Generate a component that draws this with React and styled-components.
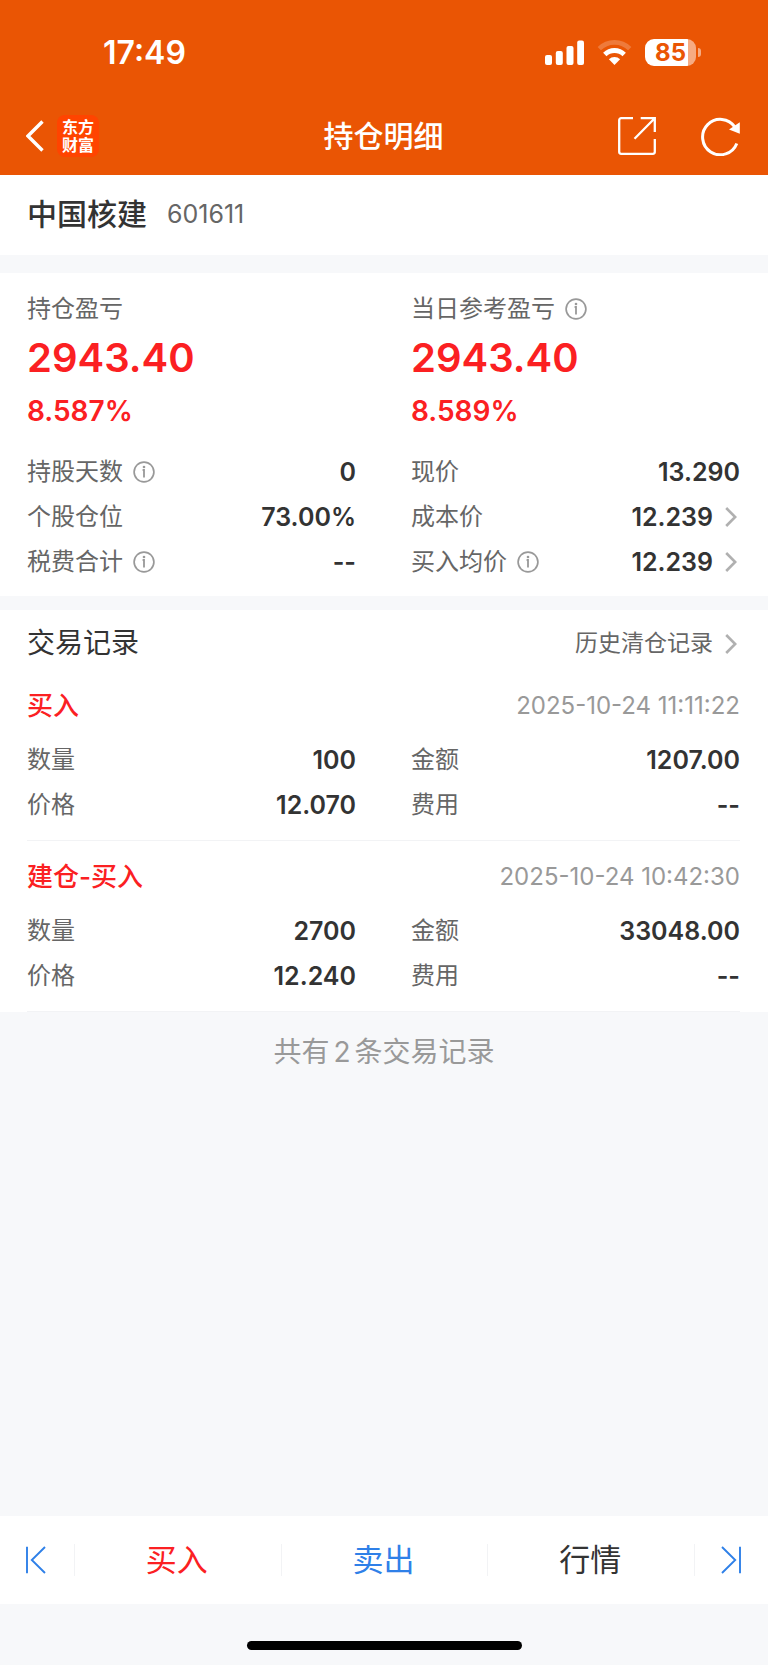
import React from "react";
import styled, { createGlobalStyle } from "styled-components";

const GlobalStyle = createGlobalStyle`
  :root {
    --brand: #ea5504;
    --rise: #fb2022;
    --link: #2f80e8;
    --text: #333;
    --s-text: #666;
    --muted: #999;
    --page: #f7f8fa;
    --line: #f2f3f5;
  }

  * {
    box-sizing: border-box;
  }

  body {
    margin: 0;
    background: var(--page);
    color: var(--text);
    font-family: Inter, "Noto Sans CJK SC", sans-serif;
    font-size: 25px;
    line-height: 1.2;
  }

  button {
    margin: 0;
    padding: 0;
    border: 0;
    background: none;
    color: inherit;
    font: inherit;
    cursor: pointer;
  }

  svg {
    display: block;
    flex: none;
  }
`;

const Page = styled.div`
  display: flex;
  flex-direction: column;
  min-height: 100vh;
`;

const Header = styled.header`
  background: var(--brand);
  color: white;
  padding-bottom: 8px;
`;

const StatusBar = styled.div`
  display: flex;
  align-items: center;
  justify-content: space-between;
  height: 105px;
  padding: 0 67px 0 103px;
`;

const Clock = styled.time`
  font-size: 32px;
  font-weight: 600;
  line-height: 40px;
`;

const StatusIcons = styled.div`
  display: flex;
  align-items: center;
  gap: 13px;
`;

const Battery = styled.div`
  display: flex;
  align-items: center;
  gap: 2px;
`;

const BatteryBody = styled.div`
  width: 51px;
  height: 27px;
  border-radius: 9px;
  background: linear-gradient(to right, white 85%, #f6ab83 85%);
  color: var(--brand);
  font-size: 24px;
  font-weight: 700;
  line-height: 27px;
  text-align: center;
`;

const BatteryCap = styled.div`
  width: 3px;
  height: 9px;
  border-radius: 0 4px 4px 0;
  background: #f6ab83;
`;

const NavBar = styled.div`
  display: grid;
  grid-template-columns: 1fr auto 1fr;
  align-items: center;
  height: 62px;
  padding: 0 27px 0 26px;
`;

const NavGroup = styled.div`
  display: flex;
  align-items: center;
  justify-content: ${(p) => (p.$end ? "flex-end" : "flex-start")};
  gap: ${(p) => (p.$end ? "45px" : "13px")};
`;

const Title = styled.h1`
  margin: 0;
  font-size: 30px;
  font-weight: 500;
`;

const Logo = styled.div`
  width: 42px;
  height: 42px;
  padding: 3px 5px;
  border-radius: 8px;
  background: #ff4400;
  font-size: 16px;
  font-weight: 700;
  line-height: 18px;
`;

const Section = styled.section`
  background: white;
  padding: 0 28px 0 27px;
  margin-bottom: ${(p) => p.$gap || 0}px;
`;

const Stock = styled.div`
  display: flex;
  align-items: center;
  gap: 20px;
  height: 80px;
  padding-bottom: 2px;
`;

const StockName = styled.h2`
  margin: 0;
  font-size: 30px;
  font-weight: 500;
`;

const StockCode = styled.span`
  color: var(--s-text);
`;

const Columns = styled.div`
  display: grid;
  grid-template-columns: 1fr 1fr;
  column-gap: 55px;
`;

const Profits = styled(Columns)`
  padding: 18px 0 16px;
`;

const Label = styled.div`
  display: flex;
  align-items: center;
  gap: 10px;
  color: var(--s-text);
  font-size: 24px;
  line-height: 36px;
`;

const Amount = styled.div`
  color: var(--rise);
  font-size: 40px;
  font-weight: 600;
  line-height: 62px;
`;

const Percent = styled.div`
  color: var(--rise);
  font-size: 28px;
  font-weight: 600;
  line-height: 44px;
`;

const Facts = styled(Columns)`
  padding-bottom: ${(p) => p.$bottom}px;
`;

const Fact = styled.div`
  display: flex;
  align-items: center;
  justify-content: space-between;
  height: 45px;
`;

const Value = styled.div`
  display: flex;
  align-items: center;
  font-weight: 600;
`;

const MoreButton = styled.button`
  display: flex;
  align-items: center;
  gap: 12px;
  padding-right: 3px;
`;

const RecordsHeader = styled.div`
  display: flex;
  align-items: center;
  justify-content: space-between;
  height: 60px;
  padding-top: 7px;
`;

const RecordsTitle = styled.h2`
  margin: 0;
  font-size: 28px;
  font-weight: 400;
`;

const HistoryLink = styled.a`
  display: flex;
  align-items: center;
  gap: 12px;
  padding-right: 3px;
  color: var(--s-text);
  font-size: 23px;
  text-decoration: none;
`;

const Record = styled.article`
  padding-top: 18px;
  border-bottom: 1px solid var(--line);
`;

const RecordTop = styled.div`
  display: flex;
  align-items: center;
  justify-content: space-between;
  height: 36px;
  margin-bottom: 13px;
`;

const RecordType = styled.h3`
  margin: 0;
  color: var(--rise);
  font-size: 26px;
  font-weight: 500;
`;

const RecordTime = styled.time`
  color: var(--muted);
  font-size: 24px;
`;

const Total = styled.p`
  flex: 1;
  margin: 0;
  padding-top: 18px;
  color: var(--muted);
  font-size: 28px;
  line-height: 44px;
  text-align: center;
`;

const Count = styled.span`
  margin: 0 4px;
`;

const TabBar = styled.nav`
  display: grid;
  grid-template-columns: 74px 1fr 1fr 1fr 74px;
  align-items: center;
  height: 88px;
  background: white;
`;

const Tab = styled.button`
  display: flex;
  align-items: center;
  justify-content: center;
  height: 32px;
  padding-right: 2px;
  color: ${(p) => p.$color};
  font-size: 31px;

  & + & {
    border-left: 1px solid var(--line);
  }
`;

const HomeArea = styled.div`
  display: flex;
  justify-content: center;
  height: 61px;
  padding-top: 37px;
`;

const HomeIndicator = styled.div`
  width: 275px;
  height: 9px;
  border-radius: 5px;
  background: black;
`;

const SignalIcon = () => (
  <svg width="39" height="25" viewBox="0 0 39 25" fill="currentColor">
    <rect x="0" y="15" width="7" height="10" rx="2" />
    <rect x="10.8" y="11" width="7" height="14" rx="2" />
    <rect x="21.5" y="6" width="7" height="19" rx="2" />
    <rect x="32.2" y="0.5" width="6.8" height="24.5" rx="2" />
  </svg>
);

const WifiIcon = () => (
  <svg width="35" height="25" viewBox="0 0 35 25" fill="currentColor">
    <path
      d="M2.3 8.7a21.5 21.5 0 0 1 30.4 0"
      fill="none"
      stroke="currentColor"
      strokeWidth="4.6"
      opacity="0.22"
    />
    <path
      d="M7.8 14.5a13.8 13.8 0 0 1 19.4 0"
      fill="none"
      stroke="currentColor"
      strokeWidth="4.8"
    />
    <path d="M11.9 19.3a8 8 0 0 1 11.2 0L17.5 25z" />
  </svg>
);

const BackIcon = () => (
  <svg width="18" height="32" viewBox="0 0 18 32" fill="none">
    <path
      d="M16.5 1.5 2 16l14.5 14.5"
      stroke="currentColor"
      strokeWidth="3.4"
    />
  </svg>
);

const OpenIcon = () => (
  <svg
    width="38"
    height="38"
    viewBox="0 0 38 38"
    fill="none"
    stroke="currentColor"
    strokeWidth="2.3"
  >
    <path d="M15 1.2H3.2a2 2 0 0 0-2 2v31.6a2 2 0 0 0 2 2h31.6a2 2 0 0 0 2-2V22" />
    <path d="M22.7 1.2h14.1V15M36.5 1.5 16.5 21.8" />
  </svg>
);

const RefreshIcon = () => (
  <svg width="40" height="39" viewBox="0 0 40 39" fill="none">
    <path
      d="M35.8 26.5A17.7 17.7 0 1 1 34 10.2"
      stroke="currentColor"
      strokeWidth="3"
    />
    <path d="M38.8 5.2v11.6L28 12.4z" fill="currentColor" />
  </svg>
);

const InfoIcon = () => (
  <svg width="22" height="22" viewBox="0 0 22 22" fill="none" stroke="#999">
    <circle cx="11" cy="11" r="9.9" strokeWidth="1.7" />
    <path d="M9.6 9H11v7.6" strokeWidth="1.8" />
    <circle cx="11" cy="6" r="1.3" fill="#999" stroke="none" />
  </svg>
);

const ChevronIcon = () => (
  <svg width="12" height="20" viewBox="0 0 12 20" fill="none">
    <path d="m1.2 1 9 9-9 9" stroke="#b0b0b0" strokeWidth="2.6" />
  </svg>
);

// mirrored for the "next" side
const StepIcon = ({ next }) => (
  <svg
    width="20"
    height="28"
    viewBox="0 0 20 28"
    fill="none"
    stroke="var(--link)"
    strokeWidth="1.9"
  >
    <path
      d={next ? "M19 .8v26.4M1 1l13.2 13L1 27" : "M1 .8v26.4M19 1 5.8 14 19 27"}
    />
  </svg>
);

const profits = [
  { label: "持仓盈亏", amount: "2943.40", percent: "8.587%" },
  { label: "当日参考盈亏", amount: "2943.40", percent: "8.589%", info: true },
];

const position = [
  { label: "持股天数", value: "0", info: true },
  { label: "现价", value: "13.290" },
  { label: "个股仓位", value: "73.00%" },
  { label: "成本价", value: "12.239", more: true },
  { label: "税费合计", value: "--", info: true },
  { label: "买入均价", value: "12.239", info: true, more: true },
];

const records = [
  {
    type: "买入",
    time: "2025-10-24 11:11:22",
    facts: [
      { label: "数量", value: "100" },
      { label: "金额", value: "1207.00" },
      { label: "价格", value: "12.070" },
      { label: "费用", value: "--" },
    ],
  },
  {
    type: "建仓-买入",
    time: "2025-10-24 10:42:30",
    facts: [
      { label: "数量", value: "2700" },
      { label: "金额", value: "33048.00" },
      { label: "价格", value: "12.240" },
      { label: "费用", value: "--" },
    ],
  },
];

function FactLabel({ label, info }) {
  return (
    <Label>
      {label}
      {info && (
        <button type="button" aria-label={`${label}说明`}>
          <InfoIcon />
        </button>
      )}
    </Label>
  );
}

function FactGrid({ facts, bottom }) {
  return (
    <Facts $bottom={bottom}>
      {facts.map(({ label, value, info, more }) => (
        <Fact key={label}>
          <FactLabel label={label} info={info} />
          <Value>
            {more ? (
              <MoreButton type="button">
                {value}
                <ChevronIcon />
              </MoreButton>
            ) : (
              value
            )}
          </Value>
        </Fact>
      ))}
    </Facts>
  );
}

export default function App() {
  return (
    <Page>
      <GlobalStyle />
      <Header>
        <StatusBar>
          <Clock>17:49</Clock>
          <StatusIcons>
            <SignalIcon />
            <WifiIcon />
            <Battery>
              <BatteryBody>85</BatteryBody>
              <BatteryCap />
            </Battery>
          </StatusIcons>
        </StatusBar>
        <NavBar>
          <NavGroup>
            <button type="button" aria-label="返回">
              <BackIcon />
            </button>
            <Logo>
              东方
              <br />
              财富
            </Logo>
          </NavGroup>
          <Title>持仓明细</Title>
          <NavGroup $end>
            <button type="button" aria-label="分享">
              <OpenIcon />
            </button>
            <button type="button" aria-label="刷新">
              <RefreshIcon />
            </button>
          </NavGroup>
        </NavBar>
      </Header>

      <Section $gap={18}>
        <Stock>
          <StockName>中国核建</StockName>
          <StockCode>601611</StockCode>
        </Stock>
      </Section>

      <Section $gap={14}>
        <Profits>
          {profits.map(({ label, amount, percent, info }) => (
            <div key={label}>
              <FactLabel label={label} info={info} />
              <Amount>{amount}</Amount>
              <Percent>{percent}</Percent>
            </div>
          ))}
        </Profits>
        <FactGrid facts={position} bottom={12} />
      </Section>

      <Section>
        <RecordsHeader>
          <RecordsTitle>交易记录</RecordsTitle>
          <HistoryLink href="#history">
            历史清仓记录
            <ChevronIcon />
          </HistoryLink>
        </RecordsHeader>
        {records.map(({ type, time, facts }) => (
          <Record key={time}>
            <RecordTop>
              <RecordType>{type}</RecordType>
              <RecordTime>{time}</RecordTime>
            </RecordTop>
            <FactGrid facts={facts} bottom={13} />
          </Record>
        ))}
      </Section>

      <Total>
        共有<Count>{records.length}</Count>条交易记录
      </Total>

      <TabBar>
        <Tab type="button" aria-label="上一只">
          <StepIcon />
        </Tab>
        <Tab type="button" $color="var(--rise)">
          买入
        </Tab>
        <Tab type="button" $color="var(--link)">
          卖出
        </Tab>
        <Tab type="button" $color="var(--text)">
          行情
        </Tab>
        <Tab type="button" aria-label="下一只">
          <StepIcon next />
        </Tab>
      </TabBar>
      <HomeArea>
        <HomeIndicator />
      </HomeArea>
    </Page>
  );
}
